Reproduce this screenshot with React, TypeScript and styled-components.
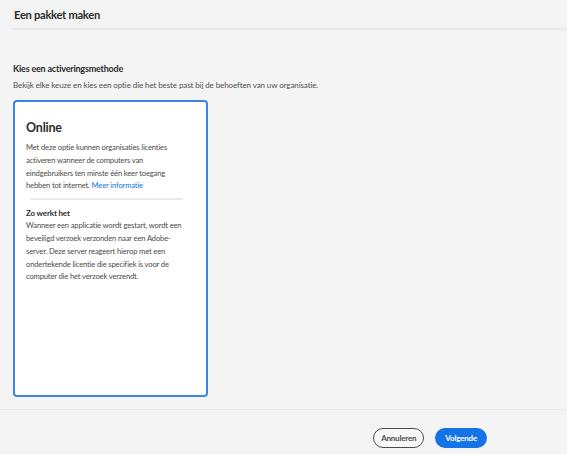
import * as React from 'react';
import styled, { createGlobalStyle } from 'styled-components';

const GlobalStyle = createGlobalStyle`
  html, body {
    margin: 0;
    padding: 0;
    background: #f4f4f4;
  }
  body {
    font-family: Lato, "Noto Sans", sans-serif;
    color: #2c2c2c;
  }
`;

const Page = styled.div`
  display: flex;
  flex-direction: column;
  min-height: 454px;
  background: #f4f4f4;
`;

const Header = styled.header`
  display: flex;
  align-items: center;
  height: 28px;
  margin-left: 13px;
  border-bottom: 2px solid #e9e9e9;
`;

const Title = styled.h1`
  margin: 0;
  padding-left: 1px;
  font-size: 11.2px;
  font-weight: 700;
  letter-spacing: -0.3px;
  color: #2c2c2c;
`;

const Main = styled.main`
  flex: 1;
  display: flex;
  flex-direction: column;
  padding: 33px 13px 7px;
`;

const SectionTitle = styled.h2`
  margin: 0;
  font-size: 9px;
  font-weight: 700;
  letter-spacing: -0.2px;
  color: #2c2c2c;
  line-height: 12px;
`;

const SectionText = styled.p`
  margin: 4px 0 0;
  font-size: 8px;
  letter-spacing: -0.1px;
  line-height: 12px;
  color: #505050;
`;

const Card = styled.section`
  box-sizing: border-box;
  width: 195px;
  height: 297px;
  margin-top: 9px;
  padding: 17px 18px 0 11px;
  background: #ffffff;
  border: 2px solid #3d84e6;
  border-radius: 4px;
`;

const CardTitle = styled.h3`
  margin: 0;
  font-size: 12.5px;
  font-weight: 700;
  letter-spacing: -0.2px;
  color: #2c2c2c;
  line-height: 18px;
`;

const CardText = styled.p<{ $top?: number }>`
  margin: ${(p) => p.$top ?? 0}px 0 0;
  font-size: 7.6px;
  letter-spacing: -0.15px;
  line-height: 12.8px;
  color: #4b4b4b;
`;

const Link = styled.a`
  color: #1473e6;
  text-decoration: none;
  cursor: pointer;
`;

const CardDivider = styled.hr`
  margin: 6px 5px 7px 4px;
  border: none;
  border-top: 2px solid #eaeaea;
`;

const CardSubtitle = styled.h4`
  margin: 0;
  font-size: 8px;
  font-weight: 700;
  letter-spacing: -0.15px;
  line-height: 12px;
  color: #2c2c2c;
`;

const Footer = styled.footer`
  display: flex;
  justify-content: flex-end;
  gap: 11px;
  padding: 18px 80px 6px 0;
  border-top: 1px solid #e9e9e9;
`;

const Button = styled.button<{ $primary?: boolean }>`
  box-sizing: border-box;
  height: 20px;
  padding: 0 ${(p) => (p.$primary ? 8 : 7)}px;
  border-radius: 10px;
  font-family: Lato, "Noto Sans", sans-serif;
  font-size: 8px;
  font-weight: 700;
  letter-spacing: -0.2px;
  cursor: pointer;
  border: ${(p) => (p.$primary ? '2px solid #1473e6' : '1.5px solid #4b4b4b')};
  background: ${(p) => (p.$primary ? '#1473e6' : '#f8f8f8')};
  color: ${(p) => (p.$primary ? '#ffffff' : '#4b4b4b')};
`;

export default function App() {
  return (
    <Page>
      <GlobalStyle />
      <Header>
        <Title>Een pakket maken</Title>
      </Header>
      <Main>
        <SectionTitle>Kies een activeringsmethode</SectionTitle>
        <SectionText>
          Bekijk elke keuze en kies een optie die het beste past bij de behoeften van uw organisatie.
        </SectionText>
        <Card>
          <CardTitle>Online</CardTitle>
          <CardText $top={4}>
            Met deze optie kunnen organisaties licenties activeren wanneer de computers van
            eindgebruikers ten minste één keer toegang hebben tot internet.{' '}
            <Link>Meer informatie</Link>
          </CardText>
          <CardDivider />
          <CardSubtitle>Zo werkt het</CardSubtitle>
          <CardText>
            Wanneer een applicatie wordt gestart, wordt een beveiligd verzoek verzonden naar een
            Adobe-server. Deze server reageert hierop met een ondertekende licentie die specifiek is
            voor de computer die het verzoek verzendt.
          </CardText>
        </Card>
      </Main>
      <Footer>
        <Button>Annuleren</Button>
        <Button $primary>Volgende</Button>
      </Footer>
    </Page>
  );
}
